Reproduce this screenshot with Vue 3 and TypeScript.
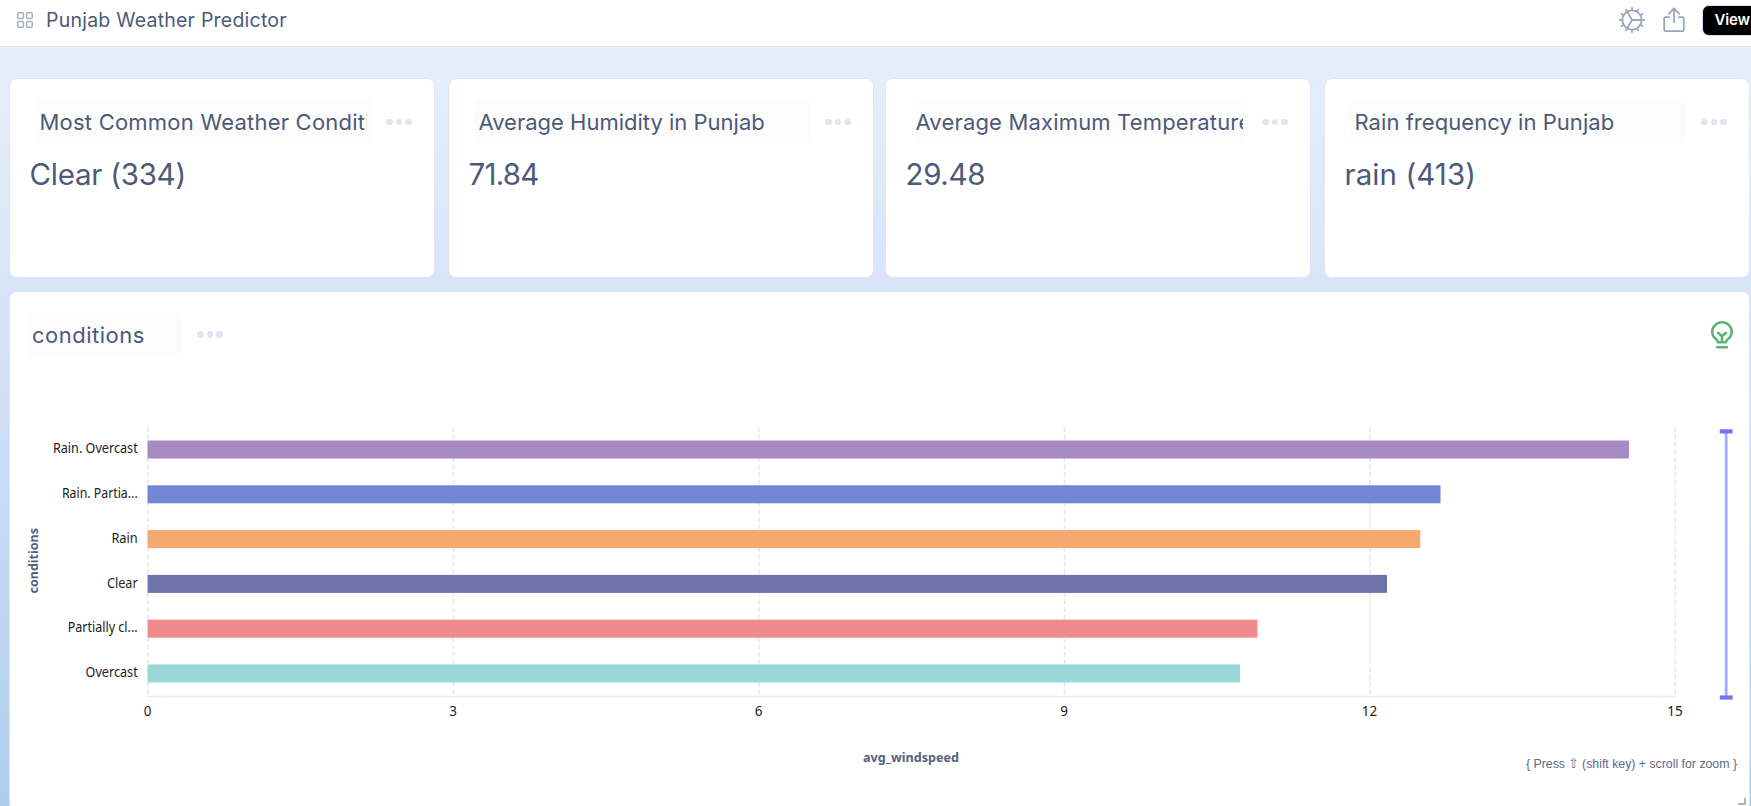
<script setup lang="ts">
interface Stat { title: string; value: string; titleSpacing: string; valueSpacing: string }
interface Bar { label: string; labelWidth: number; y: number; end: number; color: string }

const stats: Stat[] = [
  { title: 'Most Common Weather Condition', value: 'Clear (334)', titleSpacing: '0.22px', valueSpacing: '-0.25px' },
  { title: 'Average Humidity in Punjab', value: '71.84', titleSpacing: '0px', valueSpacing: '-0.75px' },
  { title: 'Average Maximum Temperature', value: '29.48', titleSpacing: '0.17px', valueSpacing: '-0.35px' },
  { title: 'Rain frequency in Punjab', value: 'rain (413)', titleSpacing: '0.05px', valueSpacing: '0.08px' },
]

const bars: Bar[] = [
  { label: 'Rain. Overcast', labelWidth: 84.8, y: 440.5, end: 1629, color: '#a789c4' },
  { label: 'Rain. Partia...', labelWidth: 75.8, y: 485.3, end: 1440.5, color: '#7386d5' },
  { label: 'Rain', labelWidth: 26.3, y: 530.1, end: 1420.3, color: '#f3a96f' },
  { label: 'Clear', labelWidth: 30.8, y: 574.9, end: 1387, color: '#7072ac' },
  { label: 'Partially cl...', labelWidth: 70, y: 619.7, end: 1257.5, color: '#f08b8b' },
  { label: 'Overcast', labelWidth: 52.2, y: 664.5, end: 1240, color: '#9ad8d8' },
]

const ticks = [0, 3, 6, 9, 12, 15].map((value, i) => ({ value, x: 148 + i * 305.45 }))
const teeth = Array.from({ length: 12 }, (_, i) => i * 30)
</script>

<template>
  <div class="page">
    <header class="topbar">
      <svg class="grid-icon" width="16" height="16" viewBox="0 0 16 16">
        <rect x=".75" y=".75" width="5.7" height="5.7" rx="1" />
        <rect x="9.55" y=".75" width="5.7" height="5.7" rx="1" />
        <rect x=".75" y="9.55" width="5.7" height="5.7" rx="1" />
        <rect x="9.55" y="9.55" width="5.7" height="5.7" rx="1" />
      </svg>
      <h1>Punjab Weather Predictor</h1>
      <svg class="gear" width="26" height="26" viewBox="-13 -13 26 26">
        <circle r="9.6" />
        <path d="M0 0H9.6M0 0L-4.8-8.3M0 0L-4.8 8.3" />
        <path v-for="a in teeth" :key="a" d="M9.6 0H12.9" :transform="`rotate(${a})`" />
      </svg>
      <svg class="share" width="22" height="26" viewBox="0 0 22 26">
        <path d="M6 10.2H2.5Q1.2 10.2 1.2 11.5V22.8Q1.2 24.2 2.5 24.2H19.5Q20.8 24.2 20.8 22.8V11.5Q20.8 10.2 19.5 10.2H16M11 15V1.5M5.7 6.8L11 1.5L16.3 6.8" />
      </svg>
      <button class="view">View</button>
    </header>

    <main class="board">
      <section class="stats">
        <article v-for="s in stats" :key="s.title" class="card">
          <div class="card-head">
            <div class="title-box"><span class="title" :style="{ letterSpacing: s.titleSpacing }">{{ s.title }}</span></div>
            <div class="dots"><i /><i /><i /></div>
          </div>
          <div class="value" :style="{ letterSpacing: s.valueSpacing }">{{ s.value }}</div>
        </article>
      </section>

      <section class="panel">
        <div class="panel-head">
          <div class="title-box short"><span class="title">conditions</span></div>
          <div class="dots"><i /><i /><i /></div>
          <svg class="bulb" width="24" height="28" viewBox="0 0 24 28">
            <path d="M8.2 21.3H15.8L17.2 18.8C19.6 17 21.8 14.6 21.8 11.1A9.8 9.8 0 0 0 2.2 11.1C2.2 14.6 4.4 17 6.8 18.8Z" />
            <path d="M12 21V15.2M8 11.8L12 15.2L16 11.8" />
            <path d="M7.2 26.3H16.8" />
          </svg>
        </div>
        <svg class="chart" width="1739" height="406" viewBox="10 400 1739 406">
          <line v-for="t in ticks" :key="t.value" class="grid-line" :x1="t.x" :x2="t.x" y1="427" y2="696" />
          <line class="axis" x1="147" x2="1676" y1="696.5" y2="696.5" />
          <g v-for="b in bars" :key="b.label">
            <rect x="147.6" :y="b.y" :width="b.end - 147.6" height="18" :fill="b.color" />
            <text class="label" x="137.7" :y="b.y + 12.6" text-anchor="end" :textLength="b.labelWidth" lengthAdjust="spacingAndGlyphs">{{ b.label }}</text>
          </g>
          <text v-for="t in ticks" :key="t.value" class="label" :x="t.x - 0.3" y="716" text-anchor="middle">{{ t.value }}</text>
          <text class="axis-name" x="863" y="762" textLength="96" lengthAdjust="spacingAndGlyphs">avg_windspeed</text>
          <text class="axis-name" transform="translate(38 593.5) rotate(-90)" textLength="65.5" lengthAdjust="spacingAndGlyphs">conditions</text>
          <text class="hint" x="1526" y="768" textLength="211" lengthAdjust="spacingAndGlyphs">{ Press ⇧ (shift key) + scroll for zoom }</text>
          <rect x="1724.7" y="431" width="2.9" height="267" fill="#a9adf9" />
          <rect x="1719.8" y="429.3" width="12.8" height="4.2" fill="#6f74f5" />
          <rect x="1719.8" y="695.4" width="12.8" height="4.2" fill="#6f74f5" />
          <path d="M1738 804H1745V798" fill="none" stroke="#b5b5b8" stroke-width="2" />
        </svg>
      </section>
    </main>
  </div>
</template>

<style>
body { margin: 0; overflow: hidden; }
</style>

<style scoped>
* { box-sizing: border-box; }
.page { width: 1751px; height: 806px; overflow: hidden; font-family: Inter, sans-serif; color: #4c5a78; display: flex; flex-direction: column; }
.topbar { flex: none; height: 47px; padding: 0 0 6px 17px; display: flex; align-items: center; background: #fff; border-bottom: 1px solid #e5e4f3; }
.grid-icon { fill: none; stroke: #a7afc0; stroke-width: 1.4; }
h1 { margin: 0 auto 0 13px; font-size: 19.5px; line-height: 28px; font-weight: 400; letter-spacing: 0.23px; white-space: nowrap; }
.gear { fill: none; stroke: #9ca6b8; stroke-width: 1.8; margin-right: 18px; }
.share { fill: none; stroke: #9ca6b8; stroke-width: 1.8; stroke-linecap: round; stroke-linejoin: round; margin-right: 17px; }
.view { width: 60px; height: 31px; margin: 0 -11px 0 0; padding: 0 0 0 11.5px; border: 1px solid #dedcf2; border-radius: 7px; background: #000; color: #fff; font: 600 15px/28px Inter, sans-serif; letter-spacing: -0.2px; text-align: left; }
.board { flex: none; height: 759px; padding: 31px 1px 0 9px; overflow: hidden; background: linear-gradient(#e7effc, #d8e5f8 31%, #b0cdee); }
.stats { display: grid; grid-template-columns: 439px 437px 439px 426px; height: 200px; }
.card { width: 426px; height: 200px; padding: 20px 0 0 25.5px; background: #fff; border: 1px solid #e4e2f5; border-radius: 8px; }
.card-head, .panel-head { display: flex; align-items: center; }
.title-box { width: 336px; height: 45px; padding: 0 5px 0 4px; display: flex; align-items: center; background: #fcfcfd; border-radius: 7px; }
.title-box.short { width: 154px; }
.title { display: block; width: 100%; overflow: hidden; white-space: nowrap; font-size: 22px; line-height: 32px; }
.short .title { letter-spacing: 0.5px; }
.dots { display: flex; gap: 3px; margin: 1px 0 0 14.8px; }
.dots i { width: 6.5px; height: 6.5px; border-radius: 50%; background: #e4e2f5; }
.value { margin: 11px 0 0 -6px; font-size: 29.5px; line-height: 38px; white-space: nowrap; }
.panel { height: 521px; margin-top: 13px; width: 1741px; background: #fff; border: 1px solid #e4e2f5; border-radius: 8px; }
.panel-head { height: 108px; padding: 20px 15px 43px 18px; }
.panel-head .dots { margin: 0 auto 0 15.3px; }
.bulb { fill: none; stroke: #5ab572; stroke-width: 2.6; stroke-linejoin: round; stroke-linecap: round; }
.chart { display: block; }
.grid-line { stroke: #e2e5f6; stroke-width: 1.4; stroke-dasharray: 5 2.5; }
.axis { stroke: #e9e9f8; stroke-width: 1.6; }
.label { font: 13.5px "Noto Sans", sans-serif; fill: #222; }
.axis-name { font: 700 13px "Noto Sans", sans-serif; fill: #56617f; }
.hint { font: 13.5px "Liberation Sans", "DejaVu Sans", sans-serif; fill: #5d6886; }
</style>
